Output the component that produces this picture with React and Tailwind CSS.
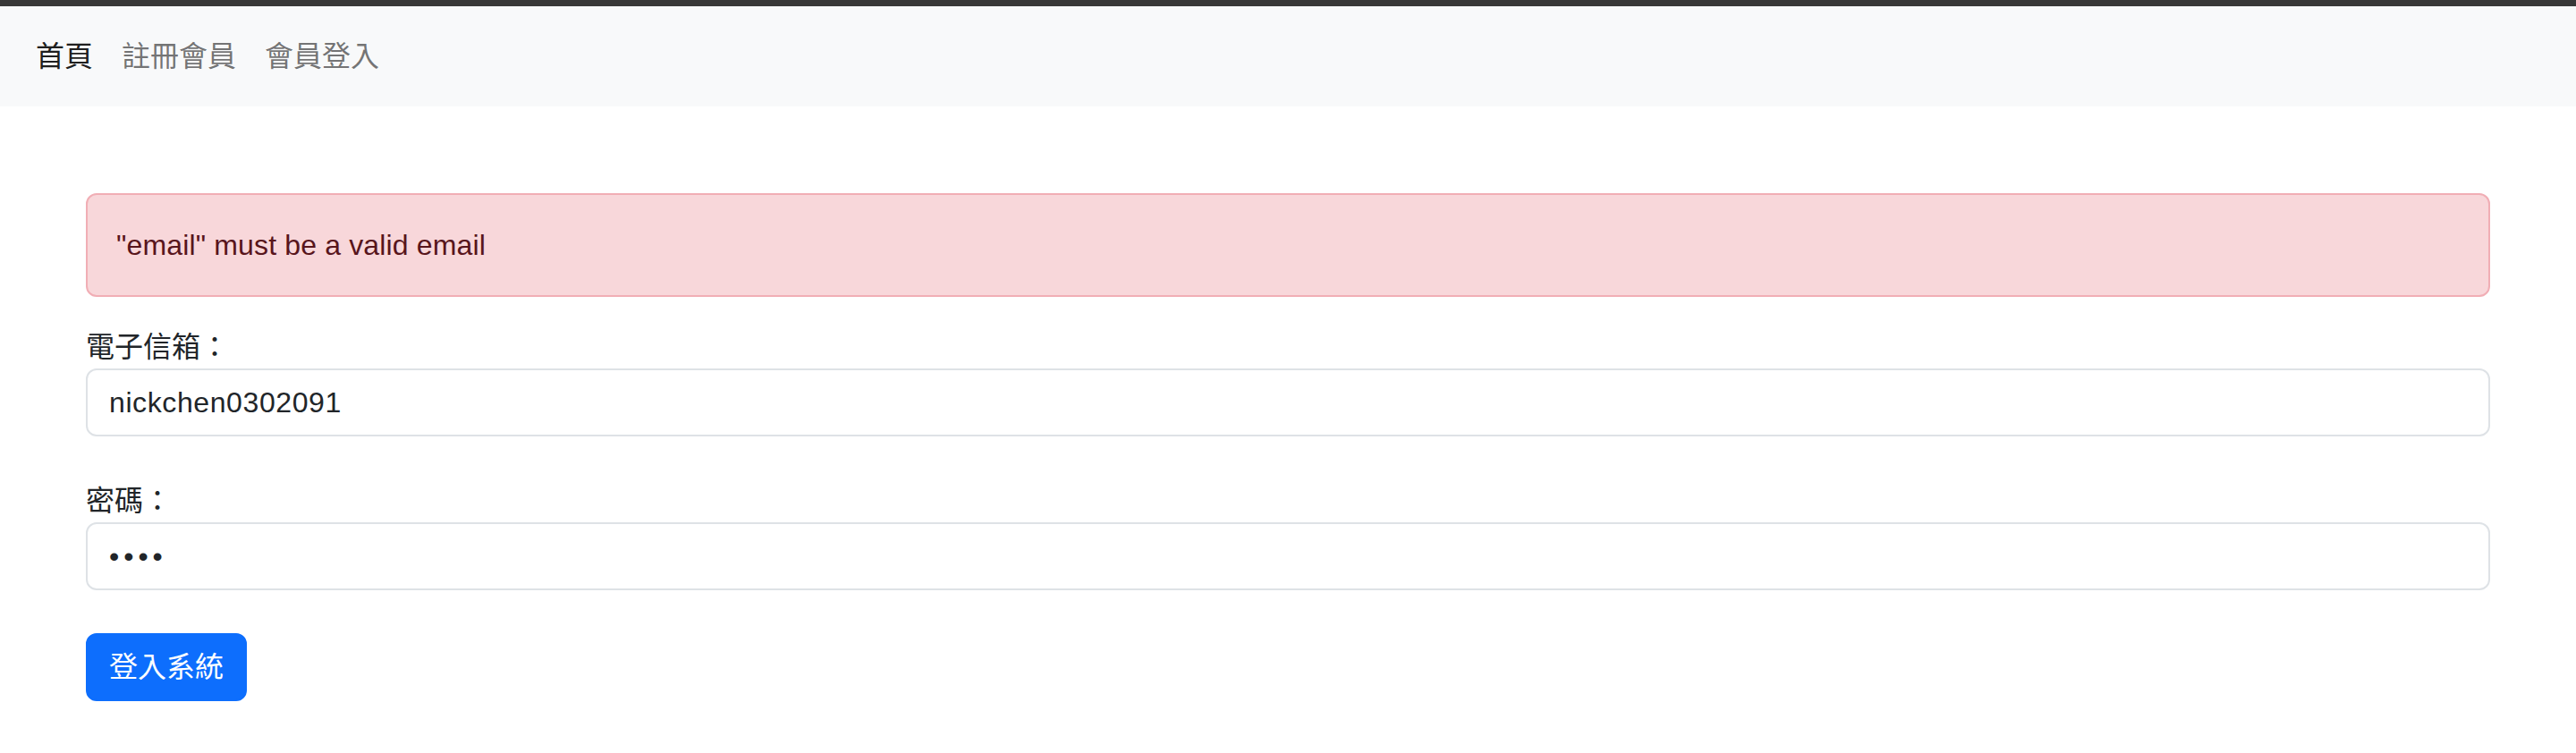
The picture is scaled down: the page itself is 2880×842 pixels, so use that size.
import React from "react";

const font = {
  fontFamily:
    '"Liberation Sans", "Noto Sans CJK TC", "Noto Sans CJK SC", sans-serif',
};

export default function App() {
  return (
    <div
      className="min-h-[842px] bg-white text-[#212529] text-[32px] leading-[48px]"
      style={font}
    >
      <div className="h-[7px] bg-[#383838]" />
      <nav className="bg-[#f8f9fa] h-[112px] px-[24px] py-[16px] flex items-center">
        <ul className="flex">
          <li>
            <a className="block px-[16px] py-[16px] text-[rgba(0,0,0,0.9)]">首頁</a>
          </li>
          <li>
            <a className="block px-[16px] py-[16px] text-[rgba(0,0,0,0.55)]">註冊會員</a>
          </li>
          <li>
            <a className="block px-[16px] py-[16px] text-[rgba(0,0,0,0.55)]">會員登入</a>
          </li>
        </ul>
      </nav>
      <main className="mx-[96px] mt-[97px]">
        <div className="bg-[#f8d7da] border-2 border-[#f1aeb5] text-[#58151c] rounded-[12px] p-[32px] mb-[32px] tracking-[0.15px]">
          "email" must be a valid email
        </div>
        <form>
          <label className="block">電子信箱：</label>
          <input
            type="text"
            readOnly
            value="nickchen0302091"
            className="block w-full h-[76px] border-2 border-[#dee2e6] rounded-[12px] px-[24px] text-[32px] text-[#212529] bg-white outline-none tracking-[0.6px]"
            style={font}
          />
          <label className="block mt-[48px]">密碼：</label>
          <input
            type="password"
            readOnly
            value="1234"
            className="block w-full h-[76px] border-2 border-[#dee2e6] rounded-[12px] px-[24px] text-[32px] text-[#212529] bg-white outline-none tracking-[5px]"
            style={font}
          />
          <button
            type="button"
            className="mt-[48px] h-[76px] px-[24px] bg-[#0d6efd] border-2 border-[#0d6efd] rounded-[12px] text-white text-[32px] leading-[48px]"
            style={font}
          >
            登入系統
          </button>
        </form>
      </main>
    </div>
  );
}
